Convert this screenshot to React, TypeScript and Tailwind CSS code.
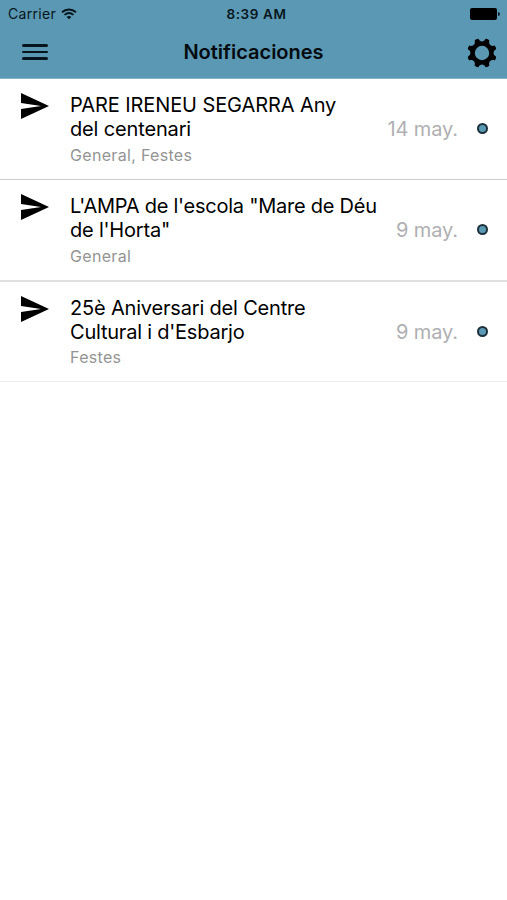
type Notice = {
  lines: { text: string; tracking: string }[];
  tags: string;
  date: string;
  row: string;
  tagsGap: string;
};

const notices: Notice[] = [
  {
    lines: [
      { text: 'PARE IRENEU SEGARRA Any', tracking: 'tracking-[-0.09px]' },
      { text: 'del centenari', tracking: 'tracking-[-0.15px]' },
    ],
    tags: 'General, Festes',
    date: '14 may.',
    row: 'h-[101px] border-b border-[#cdcdcd]',
    tagsGap: 'mt-[4px]',
  },
  {
    lines: [
      { text: 'L\'AMPA de l\'escola "Mare de Déu', tracking: 'tracking-[-0.25px]' },
      { text: 'de l\'Horta"', tracking: 'tracking-[-0.2px]' },
    ],
    tags: 'General',
    date: '9 may.',
    row: 'h-[102px] border-b-2 border-[#e0e0e0]',
    tagsGap: 'mt-[4px]',
  },
  {
    lines: [
      { text: '25è Aniversari del Centre', tracking: 'tracking-[-0.18px]' },
      { text: "Cultural i d'Esbarjo", tracking: 'tracking-[-0.22px]' },
    ],
    tags: 'Festes',
    date: '9 may.',
    row: 'h-[100px] border-b border-[#ececec]',
    tagsGap: 'mt-[3px]',
  },
];

function point(radius: number, degrees: number) {
  const a = (degrees * Math.PI) / 180;
  return `${(15 + radius * Math.cos(a)).toFixed(2)} ${(15 + radius * Math.sin(a)).toFixed(2)}`;
}

// Eight rounded teeth joined by concave notches.
const gearOutline =
  Array.from({ length: 8 }, (_, i) => {
    const c = 22.5 + i * 45;
    return `${i === 0 ? 'M' : 'L'}${point(14.6, c - 8)} Q${point(15.4, c)} ${point(14.6, c + 8)} C${point(10.9, c + 12)} ${point(10.9, c + 33)} ${point(14.6, c + 37)}`;
  }).join(' ') + ' Z M22.2 15a7.2 7.2 0 1 0-14.4 0a7.2 7.2 0 1 0 14.4 0Z';

function Gear() {
  return (
    <svg className="size-[30px]" viewBox="0 0 30 30" fill="#000" fillRule="evenodd">
      <path d={gearOutline} />
    </svg>
  );
}

function Wifi() {
  return (
    <svg className="h-[12px] w-[16px]" viewBox="0 0 16 12" fill="none" stroke="#07161c" strokeWidth="1.9">
      <path d="M1 4.2C5 .5 11 .5 15 4.2" />
      <path d="M3.5 6.9C6.2 4.5 9.8 4.5 12.5 6.9" />
      <path d="M8 11.3 5.6 8.9C7 7.7 9 7.7 10.4 8.9Z" fill="#07161c" stroke="none" />
    </svg>
  );
}

function Send() {
  return (
    <svg className="h-[26px] w-[28px]" viewBox="48 64 416 384" preserveAspectRatio="none" fill="#000">
      <path d="M48 448l416-192L48 64v149.333L346 256 48 298.667z" />
    </svg>
  );
}

function Row({ notice }: { notice: Notice }) {
  return (
    <li className={`flex pl-[21px] ${notice.row}`}>
      <div className="w-[49px] shrink-0 pt-[14px]">
        <Send />
      </div>
      <div className="min-w-0 grow whitespace-nowrap pt-[14px]">
        <h2 className="text-[20px] leading-[24px] text-black">
          {notice.lines.map((line) => (
            <span key={line.text} className={`block ${line.tracking}`}>
              {line.text}
            </span>
          ))}
        </h2>
        <p className={`text-[16px] leading-[20px] tracking-[0.32px] text-[#949494] ${notice.tagsGap}`}>{notice.tags}</p>
      </div>
      <div className="flex h-[99px] shrink-0 items-center pr-[19px]">
        <span className="pt-px text-[20px] leading-[24px] tracking-[-0.1px] text-[#afafb2]">{notice.date}</span>
        <span className="ml-[19px] size-[11px] rounded-full border-2 border-[#1d303a] bg-[#5a9ab5]" />
      </div>
    </li>
  );
}

export default function App() {
  return (
    <main className="h-[900px] w-[507px] overflow-hidden bg-white font-['Inter',sans-serif]">
      <header className="h-[79px] border-b border-[#86b3c8] bg-[#5b98b3] text-[#07161c]">
        <div className="grid h-[27px] grid-cols-3 items-center">
          <div className="flex items-center gap-[5px] pl-[8px]">
            <span className="text-[14px] leading-[18px] tracking-[0.3px]">Carrier</span>
            <Wifi />
          </div>
          <span className="pl-[6px] text-center text-[13.5px] font-semibold leading-[18px] tracking-[0.6px]">8:39 AM</span>
          <div className="flex items-center justify-end pr-[7px]">
            <span className="h-[12px] w-[27px] rounded-[2px] bg-black" />
            <span className="ml-px h-[4px] w-[2px] rounded-r-full bg-[#12242c]" />
          </div>
        </div>
        <div className="grid h-[50px] grid-cols-[100px_1fr_100px] items-center">
          <div className="flex w-[48px] flex-col gap-[4px] pl-[22px]">
            <span className="h-[2.5px] rounded-full bg-[#07161c]" />
            <span className="h-[2.5px] rounded-full bg-[#07161c]" />
            <span className="h-[2.5px] rounded-full bg-[#07161c]" />
          </div>
          <h1 className="text-center text-[20px] font-semibold leading-[26px] text-[#030b0f]">Notificaciones</h1>
          <div className="flex justify-end pr-[10px] pt-px">
            <Gear />
          </div>
        </div>
      </header>
      <ul>
        {notices.map((notice) => (
          <Row key={notice.lines[0].text} notice={notice} />
        ))}
      </ul>
    </main>
  );
}
